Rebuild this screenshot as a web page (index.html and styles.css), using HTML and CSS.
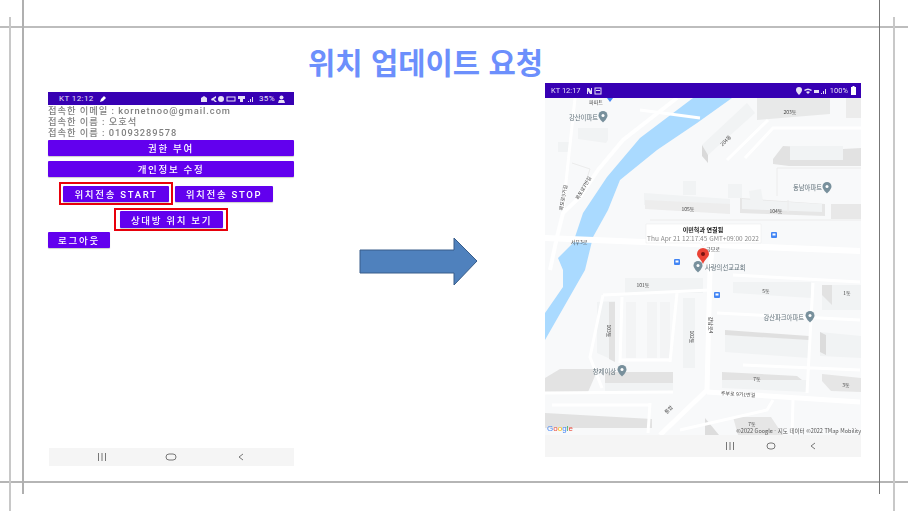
FILE: index.html
```html
<!DOCTYPE html>
<html lang="ko">
<head>
  <meta charset="UTF-8">
  <title>위치 업데이트 요청</title>
  <link rel="stylesheet" href="styles.css">
</head>
<body>
<div class="slide">
  <!-- Crop marks of the slide -->
  <i class="mark h-top"></i>
  <i class="mark h-bottom"></i>
  <i class="mark v-left-outer"></i>
  <i class="mark v-left-inner"></i>
  <i class="mark v-right-inner"></i>
  <i class="mark v-right-outer"></i>

  <h1 class="title">위치 업데이트 요청</h1>

  <div class="content">
    <!-- Left phone -->
    <section class="phone phone-app">
      <div class="status status-app">
        <span class="status-text">KT 12:12</span>
        <svg class="status-icon" width="8" height="8" viewBox="0 0 8 8"><path d="M1 7l1-3 3-3 2 2-3 3z" fill="#fff"/></svg>
        <span class="status-right">
          <svg width="56" height="8" viewBox="0 0 56 8" fill="#e6e0f5">
            <path d="M1 3l3-2 3 2v4H1z"/>
            <path d="M11 4l5-3v2l-2 1 3 3h-2l-2-2-1 1z"/>
            <circle cx="21" cy="4" r="3"/>
            <rect x="27" y="2" width="8" height="4" fill="none" stroke="#e6e0f5"/>
            <path d="M38 1h7v3h-2v3h-3V4h-2z"/>
            <path d="M48 7V6h1v1zm2 0V4h1v3zm2 0V2h1v5z"/>
          </svg>
          <span class="status-text">35%</span>
          <svg width="7" height="8" viewBox="0 0 7 8" fill="#e6e0f5"><circle cx="3.500" cy="2.500" r="2"/><path d="M0 8l1-3h5l1 3z"/></svg>
        </span>
      </div>

      <div class="info">
        <p>접속한 이메일 : kornetnoo@gmail.com</p>
        <p>접속한 이름 : 오호석</p>
        <p>접속한 이름 : 01093289578</p>
      </div>

      <button class="btn btn-wide">권한 부여</button>
      <button class="btn btn-wide">개인정보 수정</button>

      <div class="row row-start">
        <span class="highlight"><button class="btn btn-start">위치전송 START</button></span>
        <button class="btn btn-stop">위치전송 STOP</button>
      </div>
      <div class="row row-other">
        <span class="highlight"><button class="btn btn-other">상대방 위치 보기</button></span>
      </div>
      <button class="btn btn-logout">로그아웃</button>

      <div class="navbar navbar-app">
        <svg width="10" height="8" viewBox="0 0 10 8"><path d="M1.500 0v8M5 0v8M8.500 0v8" stroke="#777" stroke-width="1"/></svg>
        <svg width="12" height="8" viewBox="0 0 12 8"><rect x="1" y="1" width="10" height="6" rx="3" fill="none" stroke="#777"/></svg>
        <svg width="12" height="8" viewBox="-3 0 12 8"><path d="M5 1L1 4l4 3" fill="none" stroke="#777"/></svg>
      </div>
    </section>

    <!-- Arrow between the phones -->
    <svg class="arrow" width="120" height="49" viewBox="0 0 120 49">
      <path d="M1 13h94V1l23 23-23 24V36H1z" fill="#4f81bd" stroke="#385d8a"/>
    </svg>

    <!-- Right phone with the map -->
    <section class="phone phone-map">
      <div class="status status-map">
        <span class="status-text">KT 12:17</span>
        <svg class="status-icon" width="16" height="8" viewBox="0 0 16 8" fill="#e6e0f5">
          <path d="M1 1h2l2 3V1h1v6H4L2 4v3H1z"/>
          <rect x="9" y="1" width="6" height="6" fill="none" stroke="#e6e0f5"/>
          <rect x="10" y="3" width="4" height="1"/>
        </svg>
        <span class="status-right">
          <svg width="32" height="8" viewBox="0 0 32 8" fill="#e6e0f5">
            <path d="M4 0a3 3 0 013 3c0 2-3 5-3 5S1 5 1 3a3 3 0 013-3z"/>
            <path d="M9 3q4-3 8 0l-1 1q-3-2-6 0zm2 2q2-1.500 4 0l-2 2z"/>
            <rect x="19" y="3" width="5" height="3"/>
            <path d="M26 7V6h1v1zm2 0V4h1v3zm2 0V2h1v5z"/>
          </svg>
          <span class="status-text">100%</span>
          <svg width="5" height="9" viewBox="0 0 5 9" fill="#fff"><path d="M1.500 0h2v1H5v8H0V1h1.500z"/></svg>
        </span>
      </div>

      <svg class="map" width="316" height="337" viewBox="545 98 316 337">
        <rect x="545" y="98" width="316" height="337" fill="#f8f9fa"/>

        <!-- Buildings -->
        <g fill="#f1f3f4">
          <path d="M757 98h73v16l-73 6z" fill="#e8e9e9"/>
          <path d="M846 98h15v20h-15z" fill="#ececec"/>
          <path d="M702 145l45-42 8 10-47 42z"/>
          <path d="M702 145l6 10v8l-6-7z" fill="#d9d9d9"/>
          <path d="M578 128h30v12l-2 3-28-4z"/>
          <path d="M783 146l60 3 18-1v18h-72l-16-2v-5z" fill="#e2e2e2"/>
          <path d="M790 146h53v14h-53z"/>
          <path d="M644 193l86 6v12l-86-6z"/>
          <path d="M645 200l85 4v10l-85-5z" fill="#ededed"/>
          <path d="M740 198l85 6v12l-85-3z" fill="#e6e6e6"/>
          <path d="M742 199l80 5v8l-80-3z"/>
          <path d="M831 204h30v15h-30z" fill="#e8e8e8"/>
          <path d="M683 181h13v14h-13zM728 184h14v14h-14zM749 191l12-2 2 12-12 4zM558 142h12v10h-12z"/>
          <path d="M625 278h78v15h-78z"/>
          <path d="M733 282h78v16l-78-5z"/>
          <path d="M822 285h39v25h-39z"/>
          <path d="M822 285h10v20l-10-10z" fill="#e2e2e2"/>
          <path d="M725 330l84 6v14l-84-5z" fill="#e0e0e0"/>
          <path d="M725 335l84 5v18l-84-6z"/>
          <path d="M820 332l41 4v22l-41-2z"/>
          <path d="M820 332l6 3v20l-6-3z" fill="#dcdcdc"/>
          <path d="M597 302l18-1v60l-18-8z"/>
          <path d="M609 302h6v60l-6-3z" fill="#e2e2e2"/>
          <path d="M626 302h10v56h-10zM647 302h10v56h-10zM660 302h10v56h-10z" fill="#f3f4f5"/>
          <path d="M683 298h12v70h-12z"/>
          <path d="M545 378l15-9h38l-10 23h-43z" fill="#e3e3e3"/>
          <path d="M605 372h68v11h-68z" fill="#e3e3e3"/>
          <path d="M605 383h68v10h-68z"/>
          <path d="M722 372l75 4 10 8-85 2z" fill="#e3e3e3"/>
          <path d="M722 380h85v12l-85-4z"/>
          <path d="M822 374l39 4v14l-30-1-9-10z" fill="#e6e6e6"/>
          <path d="M545 413l107 6v9H545z" fill="#e2e2e2"/>
          <path d="M733 417h38l12 18h-45z" fill="#e6e6e6"/>
          <path d="M705 418l14 17h-14z" fill="#ddd"/>
        </g>

        <!-- Thin outlines of the blocks -->
        <path d="M777 168h84M777 168v28M650 220h211M788 212v-12M572 163l18 6-3 9" fill="none" stroke="#ececec"/>

        <!-- Water -->
        <path d="M693 98L640 138 607 177 583 213 573 243 558 258 563 270 563 287 545 313V340L585 270 593 237 608 210 620 180 657 150 697 123 732 98z" fill="#aadaff"/>

        <!-- Roads -->
        <g fill="none" stroke="#fff">
          <path stroke-width="4" d="M677 98L623 140 598 170 580 197 563 213 557 237 550 270"/>
          <path stroke-width="3" d="M575 98L563 210"/>
          <path stroke-width="6" d="M545 238L860 251"/>
          <path stroke-width="5" d="M712 250L710 270 707 390 660 435"/>
          <path stroke-width="5" d="M707 392L860 402"/>
          <path stroke-width="3" d="M861 128H773L745 158"/>
          <path stroke-width="3" d="M727 160L768 120M700 118L640 110"/>
          <path stroke-width="3" d="M603 295L710 290M622 297L620 363M677 293L670 362M620 360H670"/>
          <path stroke-width="3" d="M603 295L590 357 602 388M545 393L673 392"/>
          <path stroke-width="3" d="M733 275L860 282M717 313L860 320M813 283L807 393M743 365L860 370"/>
          <path stroke-width="3" d="M650 403L648 433M773 400L767 410 680 430M793 400L792 435M552 405H650"/>
        </g>

        <!-- Bus stops -->
        <g fill="#4285f4">
          <rect x="771" y="232" width="6" height="6" rx="1"/>
          <rect x="674" y="259" width="6" height="6" rx="1"/>
          <rect x="714" y="292" width="6" height="6" rx="1"/>
        </g>
        <g fill="#fff">
          <rect x="772.500" y="233.500" width="3" height="2"/>
          <rect x="675.500" y="260.500" width="3" height="2"/>
          <rect x="715.500" y="293.500" width="3" height="2"/>
        </g>

        <!-- Place pins -->
        <g fill="#78909c">
          <path d="M603 111a4.500 4.500 0 014.500 4.500c0 3-4.500 7-4.500 7s-4.500-4-4.500-7A4.500 4.500 0 01603 111z"/>
          <path d="M827 182a4.500 4.500 0 014.500 4.500c0 3-4.500 7-4.500 7s-4.500-4-4.500-7a4.500 4.500 0 014.500-4.500z"/>
          <path d="M810 311a4.500 4.500 0 014.500 4.500c0 3-4.500 7-4.500 7s-4.500-4-4.500-7a4.500 4.500 0 014.500-4.500z"/>
          <path d="M622 365a4.500 4.500 0 014.500 4.500c0 3-4.500 7-4.500 7s-4.500-4-4.500-7a4.500 4.500 0 014.500-4.500z"/>
          <path d="M698 261a4.500 4.500 0 014.500 4.500c0 3-4.500 7-4.500 7s-4.500-4-4.500-7a4.500 4.500 0 014.500-4.500z"/>
          <path d="M607 98h6l-3 4z" fill="#4285f4"/>
        </g>
        <g fill="#fff">
          <circle cx="603" cy="115.500" r="1.500"/>
          <circle cx="827" cy="186.500" r="1.500"/>
          <circle cx="810" cy="315.500" r="1.500"/>
          <circle cx="622" cy="369.500" r="1.500"/>
          <circle cx="698" cy="265.500" r="1.500"/>
        </g>

        <!-- Labels -->
        <g class="place">
          <text x="598" y="120" text-anchor="end">강산이파트</text>
          <text x="822" y="190" text-anchor="end">동남아파트</text>
          <text x="705" y="270">사랑의선교교회</text>
          <text x="804" y="320" text-anchor="end">강산파크아파트</text>
          <text x="616" y="374" text-anchor="end">창제이상</text>
        </g>
        <g class="road-label">
          <text x="596" y="104" text-anchor="middle">파파트</text>
          <text x="790" y="114" text-anchor="middle">203동</text>
          <text x="688" y="211" text-anchor="middle">105동</text>
          <text x="776" y="213" text-anchor="middle">104동</text>
          <text x="643" y="287" text-anchor="middle">101동</text>
          <text x="766" y="293" text-anchor="middle">5동</text>
          <text x="847" y="295" text-anchor="middle">1동</text>
          <text x="757" y="381" text-anchor="middle">7동</text>
          <text x="846" y="387" text-anchor="middle">3동</text>
          <text x="752" y="426" text-anchor="middle">7동</text>
          <text x="579" y="244" text-anchor="middle">서부3로</text>
          <text x="713" y="251" text-anchor="middle">금모로</text>
          <text x="738" y="396" text-anchor="middle" transform="rotate(3 738 396)">주부로 9가1번길</text>
          <text x="727" y="142" text-anchor="middle" transform="rotate(-45 727 142)">204동</text>
          <text x="607" y="331" text-anchor="middle" transform="rotate(90 607 331)">103동</text>
          <text x="690" y="337" text-anchor="middle" transform="rotate(90 690 337)">102동</text>
          <text x="709" y="325" text-anchor="middle" transform="rotate(90 709 325)">강남로4</text>
          <text x="585" y="189" text-anchor="middle" transform="rotate(-60 585 189)">목포로7번길</text>
          <text x="565" y="198" text-anchor="middle" transform="rotate(-80 565 198)">목포로9가길</text>
          <text x="670" y="411" text-anchor="middle" transform="rotate(-45 670 411)">통합</text>
        </g>

        <!-- Info window and marker -->
        <path d="M646 224h115v19h-55l-3 4-3-4h-54z" fill="#fff" stroke="#eaeaea" stroke-width="0.500"/>
        <text class="info-title" x="703" y="232" text-anchor="middle">이민혁과 연결됨</text>
        <text class="info-date" x="703" y="240.500" text-anchor="middle">Thu Apr 21 12:17:45 GMT+09:00 2022</text>
        <path d="M703 248a6 6 0 016 6c0 3-4 5-6 10-2-5-6-7-6-10a6 6 0 016-6z" fill="#ea4335"/>
        <circle cx="703" cy="254" r="2" fill="#7a1410"/>

        <!-- Attribution -->
        <text class="google" x="547" y="431"><tspan fill="#4285f4">G</tspan><tspan fill="#ea4335">o</tspan><tspan fill="#fbbc05">o</tspan><tspan fill="#4285f4">g</tspan><tspan fill="#34a853">l</tspan><tspan fill="#ea4335">e</tspan></text>
        <text class="copyright" x="861" y="433" text-anchor="end">©2022 Google - 지도 데이터 ©2022 TMap Mobility</text>
      </svg>

      <div class="navbar navbar-map">
        <svg width="10" height="8" viewBox="0 0 10 8"><path d="M1.500 0v8M5 0v8M8.500 0v8" stroke="#777" stroke-width="1"/></svg>
        <svg width="10" height="8" viewBox="0 0 10 8"><rect x="1" y="1" width="8" height="6" rx="3" fill="none" stroke="#777"/></svg>
        <svg width="12" height="8" viewBox="-3 0 12 8"><path d="M5 1L1 4l4 3" fill="none" stroke="#777"/></svg>
      </div>
    </section>
  </div>
</div>
</body>
</html>
```

FILE: styles.css
```css
/* Basic reset and slide */
body {
  margin: 0;
  background: #fff;
  font-family: "Roboto", "Noto Sans CJK KR", sans-serif;
}
.slide {
  position: relative;
  width: 908px;
  height: 511px;
  overflow: hidden;
  background: #fff;
}

/* Crop marks */
.mark {
  position: absolute;
  background: #b8b8b8;
}
.h-top { left: 0; right: 0; top: 26px; height: 2px; background: #bdbdbd; }
.h-bottom { left: 0; right: 0; top: 481px; height: 2px; background: #b5b5b5; }
.v-left-outer { left: 9px; width: 2px; top: 17px; bottom: 0; background: #c8c8c8; }
.v-left-inner { left: 22px; width: 2px; top: 0; height: 494px; background: #b0b0b0; }
.v-right-inner { left: 879px; width: 1px; top: 0; height: 494px; background: #777; }
.v-right-outer { left: 893px; width: 2px; top: 17px; bottom: 0; background: #c8c8c8; }

/* Title */
.title {
  margin: 0;
  height: 83px;
  box-sizing: border-box;
  padding: 41px 0 0 308px;
  font-family: "Noto Sans CJK KR", sans-serif;
  font-size: 29.700px;
  line-height: 42px;
  font-weight: 700;
  color: #6c8ffc;
  white-space: nowrap;
}

/* Main row */
.content {
  display: flex;
  align-items: flex-start;
  padding-left: 48px;
}
.phone {
  display: flex;
  flex-direction: column;
  height: 374px;
  filter: blur(0.4px);
}
.phone-app {
  width: 246px;
  margin-top: 9px;
}
.phone-map {
  width: 316px;
  margin-left: 66px;
}
.arrow {
  margin: 154px 0 0 65px;
  flex: none;
}

/* Status bars */
.status {
  display: flex;
  align-items: center;
  flex: none;
  background: #3700b3;
  color: #e6e0f5;
}
.status-app {
  height: 13px;
  padding: 0 9px 0 11px;
}
.status-map {
  height: 15px;
  padding: 0 5px 0 6px;
}
.status-text {
  font-size: 8px;
  letter-spacing: 0.4px;
}
.status-map .status-text {
  font-size: 7.500px;
  letter-spacing: 0;
}
.status-icon {
  margin-left: 5px;
}
.status-right {
  margin-left: auto;
  display: flex;
  align-items: center;
  gap: 3px;
}

/* Account info */
.info {
  height: 33px;
  margin-bottom: 2px;
  color: #808080;
  font-size: 9.300px;
  font-weight: 500;
  letter-spacing: 0.95px;
}
.info p {
  margin: 0;
  line-height: 11px;
}

/* Buttons */
.btn {
  display: block;
  height: 16px;
  padding: 0;
  border: 0;
  border-radius: 1px;
  background: #6200ee;
  color: #fff;
  font-family: "Roboto", "Noto Sans CJK KR", sans-serif;
  font-size: 9.500px;
  font-weight: 500;
  letter-spacing: 1.700px;
  box-shadow: 0 1px 1px rgba(0, 0, 0, 0.2);
}
.btn-wide {
  width: 100%;
  margin-bottom: 5px;
}
.btn-start { width: 106px; }
.btn-stop { width: 98px; margin-left: 2px; }
.btn-other { width: 103px; height: 17px; }
.btn-logout { width: 62px; margin-top: 1px; }

.row {
  display: flex;
  align-items: center;
}
.row-start { padding-left: 11px; }
.row-other { padding-left: 66px; margin-top: 3px; }
.highlight {
  display: block;
  padding: 2px 2px 1px 2px;
  border: 2px solid #e8000b;
}
.row-other .highlight { padding: 1px 3px 1px 4px; }

/* Bottom navigation */
.navbar {
  flex: none;
  display: flex;
  align-items: center;
  background: #f5f5f5;
}
.navbar-app {
  height: 18px;
  margin: auto 0 0 1px;
  padding-left: 48px;
  gap: 58px;
}
.navbar-map {
  height: 22px;
  padding-left: 180px;
  gap: 31px;
}

/* Map labels */
.map {
  display: block;
  flex: none;
  font-family: "Noto Sans CJK KR", sans-serif;
}
.place { font-size: 6.300px; fill: #5f6f78; }
.road-label { font-size: 5px; fill: #444; }
.info-title { font-size: 6px; font-weight: 700; fill: #111; }
.info-date { font-size: 6.500px; fill: #888; }
.google { font-family: "Liberation Sans", sans-serif; font-size: 8px; }
.copyright { font-size: 5.500px; fill: #555; }
```
